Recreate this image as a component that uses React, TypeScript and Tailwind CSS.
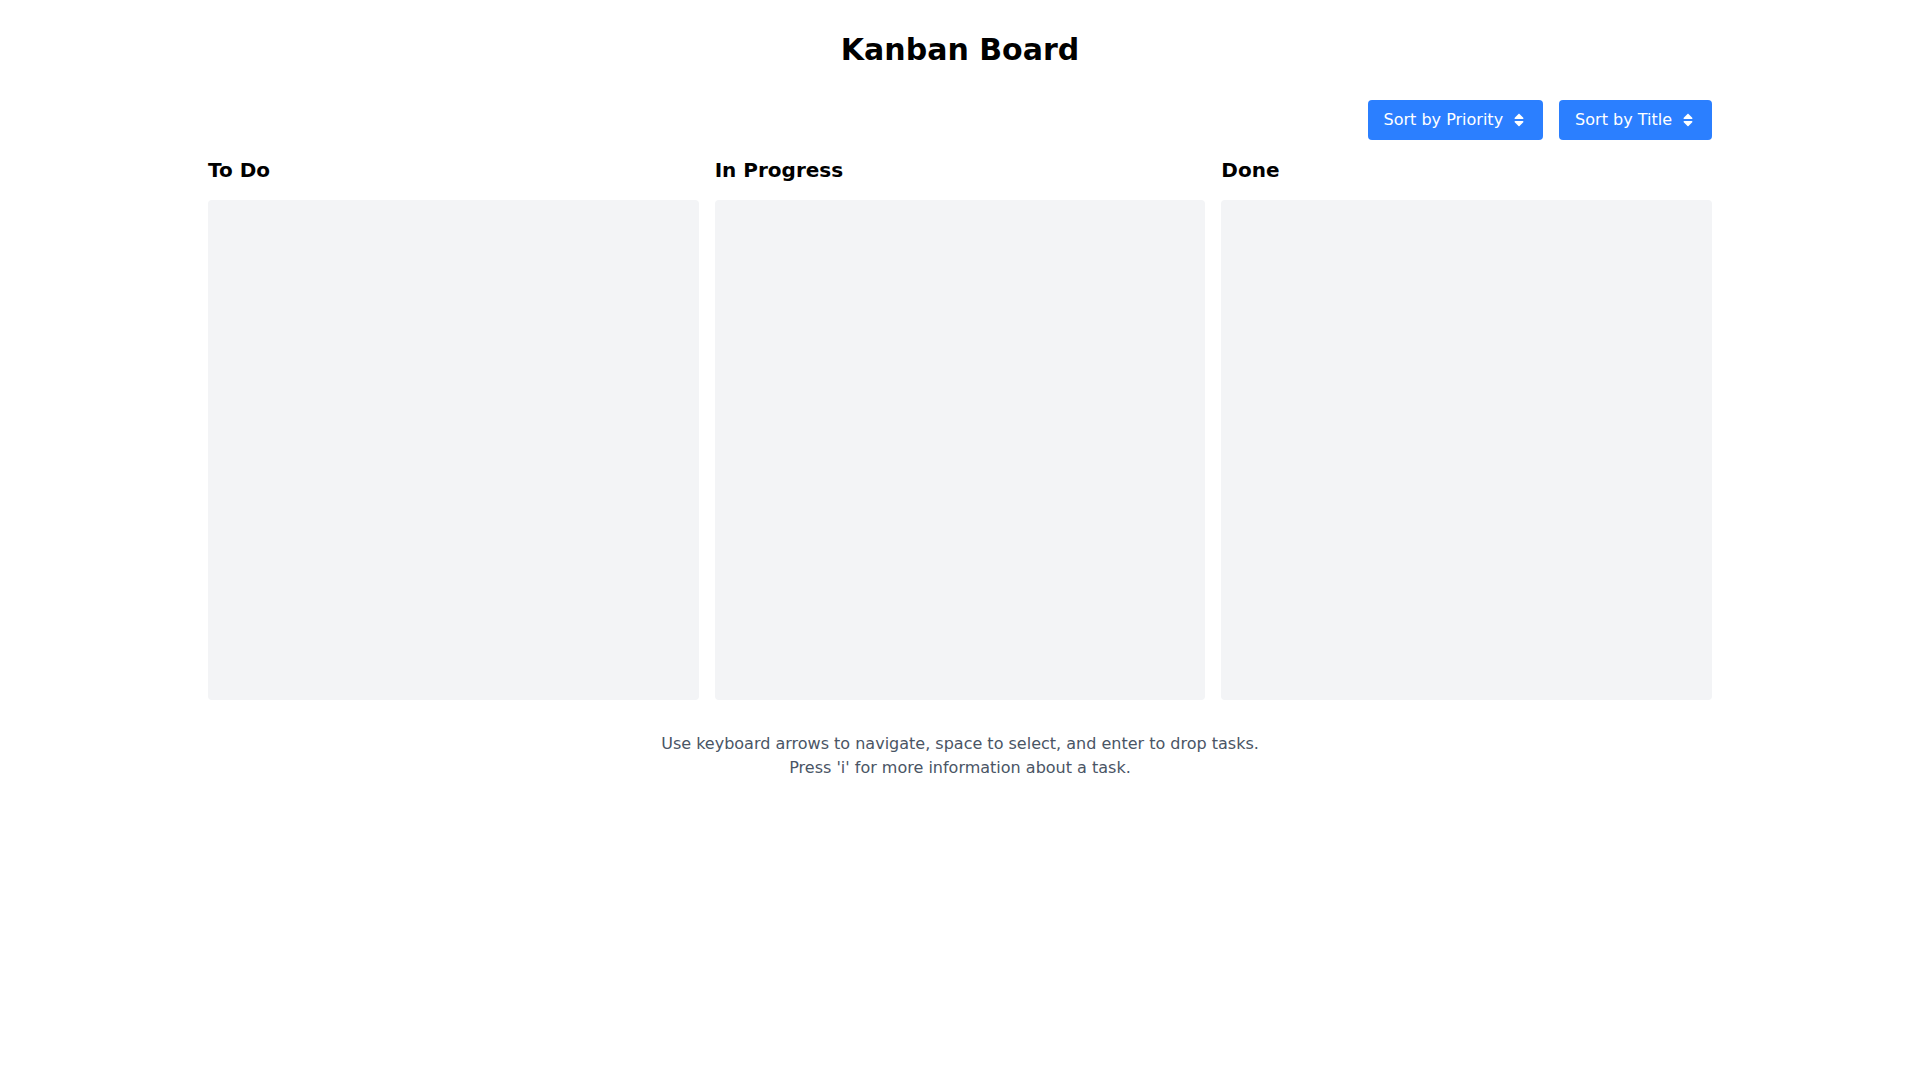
import React from "react";

function SortIcon() {
  return (
    <svg viewBox="0 0 320 512" className="ml-2 h-4 w-4" fill="currentColor" aria-hidden="true">
      <path d="M41 288h238c21.4 0 32.1 25.9 17 41L177 448c-9.4 9.4-24.6 9.4-33.9 0L24 329c-15.1-15.1-4.4-41 17-41zm255-105L177 64c-9.4-9.4-24.6-9.4-33.9 0L24 183c-15.1 15.1-4.4 41 17 41h238c21.4 0 32.1-25.9 17-41z" />
    </svg>
  );
}

const columns = ["To Do", "In Progress", "Done"];

export default function App() {
  return (
    <div className="min-h-screen bg-white text-black" style={{ fontFamily: '"DejaVu Sans", sans-serif' }}>
      <div className="mx-auto max-w-[1536px] px-4 py-8">
        <h1 className="mb-8 text-center text-3xl font-bold">Kanban Board</h1>
        <div className="mb-4 flex justify-end gap-4">
          <button className="flex items-center rounded bg-blue-500 px-4 py-2 text-base text-white">
            Sort by Priority
            <SortIcon />
          </button>
          <button className="flex items-center rounded bg-blue-500 px-4 py-2 text-base text-white">
            Sort by Title
            <SortIcon />
          </button>
        </div>
        <div className="grid grid-cols-3 gap-4">
          {columns.map((c) => (
            <div key={c}>
              <h2 className="mb-4 text-xl font-bold">{c}</h2>
              <div className="h-[500px] rounded bg-gray-100"></div>
            </div>
          ))}
        </div>
        <div className="mt-8 text-center text-base text-gray-600">
          <p className="leading-6">Use keyboard arrows to navigate, space to select, and enter to drop tasks.</p>
          <p className="leading-6">Press 'i' for more information about a task.</p>
        </div>
      </div>
    </div>
  );
}
